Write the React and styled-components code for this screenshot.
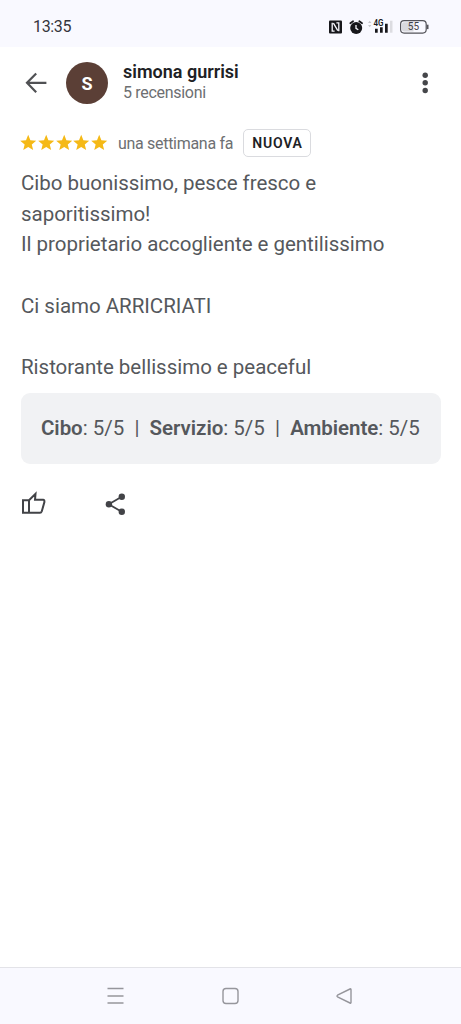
import * as React from "react";
import styled, { createGlobalStyle } from "styled-components";

const GlobalStyle = createGlobalStyle`
  * {
    box-sizing: border-box;
  }

  body {
    margin: 0;
    background-color: #ffffff;
  }
`;

const Screen = styled.div`
  display: flex;
  flex-direction: column;
  width: 100%;
  height: 1024px;
  overflow: hidden;
  font-family: Roboto, sans-serif;
  color: #55585c;
`;

const StatusBar = styled.header`
  display: flex;
  align-items: center;
  justify-content: space-between;
  flex: none;
  height: 47px;
  padding: 7px 31px 0 33px;
  background-color: #f9f9ff;
`;

const Clock = styled.span`
  font-size: 16px;
  line-height: 20px;
  letter-spacing: -0.35px;
  color: #35353c;
`;

const ReviewHeader = styled.div`
  display: flex;
  align-items: center;
  flex: none;
  height: 72px;
  padding: 0 24px;
`;

const Avatar = styled.div`
  display: flex;
  align-items: center;
  justify-content: center;
  width: 42px;
  height: 42px;
  margin: 0 15px 0 18px;
  border-radius: 50%;
  background-color: #5b3f36;
  color: #ffffff;
  font-size: 18px;
  font-weight: 700;
`;

const Author = styled.div`
  flex: 1;
  padding-bottom: 2px;
`;

const AuthorName = styled.h1`
  margin: 0;
  font-size: 18px;
  font-weight: 600;
  line-height: 21px;
  white-space: nowrap;
  color: #202124;
`;

const AuthorMeta = styled.p`
  margin: 0;
  font-size: 16px;
  line-height: 21px;
  letter-spacing: -0.3px;
  color: #6d6f72;
`;

const Rating = styled.div`
  display: flex;
  align-items: center;
  flex: none;
  height: 48px;
  padding: 0 20px;
`;

const Stars = styled.div`
  display: flex;
  margin-right: 9px;
`;

const ReviewDate = styled.span`
  width: 125.5px;
  font-size: 16px;
  letter-spacing: -0.3px;
  white-space: nowrap;
  color: #6d6f72;
`;

const NewBadge = styled.span`
  width: 68px;
  height: 28px;
  border: 1.5px solid #dadbdf;
  border-radius: 5px;
  font-size: 14px;
  font-weight: 600;
  line-height: 26px;
  letter-spacing: 0.8px;
  text-align: center;
  color: #202124;
`;

const ReviewText = styled.p`
  flex: none;
  margin: 1px 20px 0 21px;
  font-size: 20.5px;
  line-height: 30.7px;
  letter-spacing: -0.02px;
  white-space: pre-line;
`;

const Scores = styled.div`
  display: flex;
  align-items: center;
  flex: none;
  height: 71px;
  margin: 10px 20px 0 21px;
  padding: 0 20px;
  border-radius: 9px;
  background-color: #f1f2f4;
  font-size: 20.5px;
  white-space: pre;

  b {
    font-weight: 600;
    letter-spacing: -0.05px;
  }
`;

const Actions = styled.div`
  display: flex;
  align-items: center;
  gap: 57px;
  flex: none;
  height: 81px;
  padding: 0 21px;
`;

const NavBar = styled.nav`
  display: flex;
  align-items: center;
  justify-content: space-between;
  flex: none;
  height: 57px;
  margin-top: auto;
  padding: 0 107px 0 106px;
  border-top: 1px solid #e3e3e8;
  background-color: #f9f9ff;
`;

const scores = [
  { label: "Cibo", value: "5/5" },
  { label: "Servizio", value: "5/5" },
  { label: "Ambiente", value: "5/5" }
];

const review = `Cibo buonissimo, pesce fresco e saporitissimo!
Il proprietario accogliente e gentilissimo

Ci siamo ARRICRIATI

Ristorante bellissimo e peaceful`;

const StatusIcons = () => (
  <svg width="101" height="20" viewBox="0 0 101 20">
    {/* NFC */}
    <rect x="0" y="3.5" width="13" height="13" rx="1" fill="#17171b" />
    <path
      d="M5.6 14.2H3.2V5.8M4.4 6.2L8.8 13.6M7.4 5.8H9.8V14.2"
      fill="none"
      stroke="#f9f9ff"
      strokeWidth="1.3"
    />
    {/* alarm */}
    <circle cx="27.2" cy="10.9" r="6" fill="#17171b" />
    <path
      d="M21.3 6.3L24.1 4.2M30.3 4.2L33.1 6.3"
      stroke="#17171b"
      strokeWidth="1.7"
      strokeLinecap="round"
    />
    <path d="M27 8V11.3L29.3 12.8" fill="none" stroke="#f9f9ff" strokeWidth="1.3" />
    {/* mobile signal */}
    <path d="M39 6L40.7 3.8L42.4 6ZM39 8H42.4L40.7 10.2Z" fill="#c8c8ce" />
    <text
      x="44.4"
      y="8.8"
      fontFamily="Roboto, sans-serif"
      fontSize="8.5"
      fontWeight="600"
      textLength="10"
      lengthAdjust="spacingAndGlyphs"
      fill="#17171b"
    >
      4G
    </text>
    <path d="M46 11.8H48.7V15.7H46ZM51 10.3H53.7V15.7H51ZM56 6.7H58.7V15.7H56Z" fill="#17171b" />
    <path d="M61 3.7H63.5V15.7H61Z" fill="#dcdce1" />
    {/* battery */}
    <rect x="71.6" y="3.7" width="25.6" height="12.4" rx="3.5" fill="#f9f9ff" stroke="#535359" strokeWidth="1.2" />
    <path d="M75 5.2H84.5V14.6H75Q73 14.6 73 12.6V7.2Q73 5.2 75 5.2Z" fill="#d9d9de" />
    <path d="M98.6 7.7V12.1" stroke="#535359" strokeWidth="1.8" />
    <text x="84.4" y="13.3" fontFamily="Roboto, sans-serif" fontSize="10" textAnchor="middle" fill="#424248">
      55
    </text>
  </svg>
);

const BackIcon = () => (
  <svg width="24" height="24" viewBox="0 0 24 24" fill="none" stroke="#505154" strokeWidth="2.2">
    <path d="M22.4 11.8H3.2M12.2 2.4L3 11.8L12.2 21.2" />
  </svg>
);

const MoreIcon = () => (
  <svg width="24" height="24" viewBox="0 0 24 24" fill="#45464a">
    <circle cx="12.2" cy="4.2" r="2.7" />
    <circle cx="12.2" cy="11.8" r="2.7" />
    <circle cx="12.2" cy="19.5" r="2.7" />
  </svg>
);

const Star = () => (
  <svg width="17.8" height="18" viewBox="0 0 18 18" fill="#f5b916">
    <path d="M8.3 0.6L10.5 6.1L16.4 6.6L11.9 10.4L13.3 16.2L8.3 13.1L3.3 16.2L4.7 10.4L0.2 6.6L6.1 6.1Z" />
  </svg>
);

const LikeIcon = () => (
  <svg width="26" height="26" viewBox="0 0 26 26" fill="none" stroke="#424347" strokeWidth="2">
    <path d="M2 9.2H8V21.8H2ZM8 9.2L14.5 2.8L14 8.8H22.2Q23.5 8.8 23.4 11L20.8 20.3Q20.3 21.8 19 21.8H8" />
  </svg>
);

const ShareIcon = () => (
  <svg width="24" height="26" viewBox="0 0 24 26" fill="#424347">
    <path d="M17.7 5.8L4.8 13.2L17.7 20.8" fill="none" stroke="#424347" strokeWidth="1.8" />
    <circle cx="17.8" cy="5.8" r="3.2" />
    <circle cx="4.9" cy="13.2" r="3.2" />
    <circle cx="17.8" cy="20.8" r="3.2" />
  </svg>
);

const NavIcon = ({ children }) => (
  <svg width="19" height="18" viewBox="0 0 19 18" fill="none" stroke="#96969c" strokeWidth="1.4">
    {children}
  </svg>
);

const App = () => {
  return (
    <>
      <GlobalStyle />
      <Screen>
        <StatusBar>
          <Clock>13:35</Clock>
          <StatusIcons />
        </StatusBar>
        <ReviewHeader>
          <BackIcon />
          <Avatar>S</Avatar>
          <Author>
            <AuthorName>simona gurrisi</AuthorName>
            <AuthorMeta>5 recensioni</AuthorMeta>
          </Author>
          <MoreIcon />
        </ReviewHeader>
        <Rating>
          <Stars>
            {[1, 2, 3, 4, 5].map((n) => (
              <Star key={n} />
            ))}
          </Stars>
          <ReviewDate>una settimana fa</ReviewDate>
          <NewBadge>NUOVA</NewBadge>
        </Rating>
        <ReviewText>{review}</ReviewText>
        <Scores>
          {scores.map((score, i) => (
            <span key={score.label}>
              {i > 0 && "  |  "}
              <b>{score.label}</b>: {score.value}
            </span>
          ))}
        </Scores>
        <Actions>
          <LikeIcon />
          <ShareIcon />
        </Actions>
        <NavBar>
          <NavIcon>
            <path d="M1.5 1.5H17.5M1.5 9H17.5M1.5 16H17.5" />
          </NavIcon>
          <NavIcon>
            <rect x="2" y="1.5" width="15" height="15" rx="3" />
          </NavIcon>
          <NavIcon>
            <path d="M16 2.4V15.6Q16 16.5 15 16L2.5 9.8Q1.5 9 2.5 8.2L15 2Q16 1.5 16 2.4Z" />
          </NavIcon>
        </NavBar>
      </Screen>
    </>
  );
};

export default App;
